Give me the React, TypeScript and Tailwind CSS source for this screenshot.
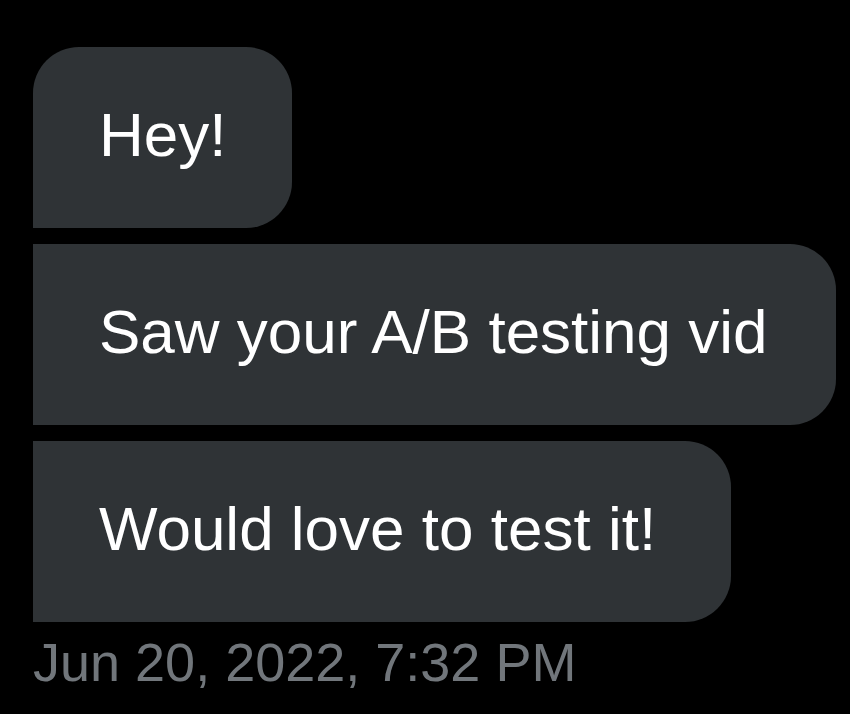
export default function App() {
  const bubble =
    "h-[181px] flex items-center bg-[#2f3336] text-white text-[62px] leading-[normal] pl-[66px] pb-[6px] rounded-r-[46px]";
  return (
    <div
      className="w-[850px] h-[714px] bg-black overflow-hidden pl-[33px] pt-[47px]"
      style={{ fontFamily: '"Liberation Sans", Arial, sans-serif' }}
    >
      <div className="flex flex-col gap-[16px]">
        <div className={bubble + " w-[259px] rounded-tl-[46px]"}>Hey!</div>
        <div className={bubble + " w-[803px]"}>Saw your A/B testing vid</div>
        <div className={bubble + " w-[698px]"}>Would love to test it!</div>
      </div>
      <div className="mt-[9px] text-[54px] leading-[normal] text-[#71767b]">
        Jun 20, 2022, 7:32 PM
      </div>
    </div>
  );
}
